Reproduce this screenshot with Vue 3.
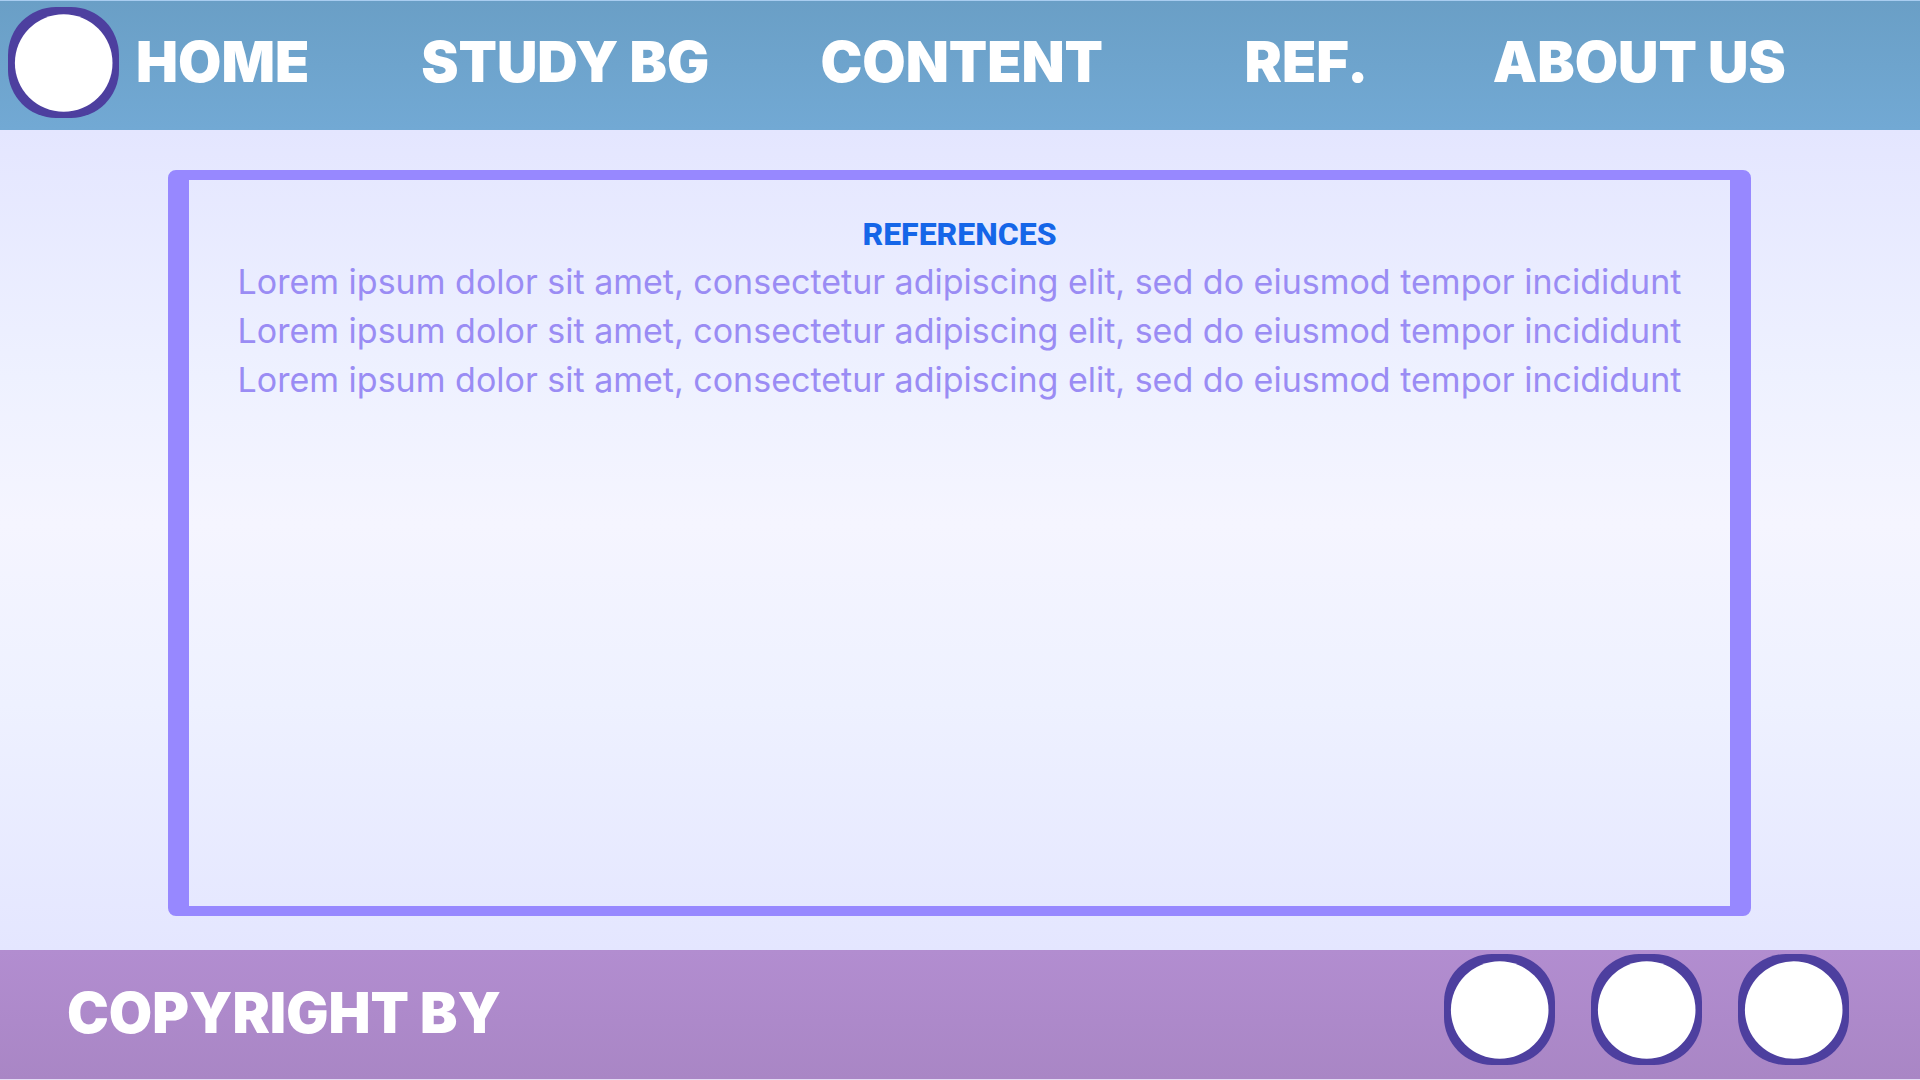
<script setup>
const links = [
  { label: 'HOME', href: '#home' },
  { label: 'STUDY BG', href: '#study-bg' },
  { label: 'CONTENT', href: '#content' },
  { label: 'REF.', href: '#references' },
  { label: 'ABOUT US', href: '#about-us' },
]
const references = Array.from(
  { length: 3 },
  () => 'Lorem ipsum dolor sit amet, consectetur adipiscing elit, sed do eiusmod tempor incididunt',
)
const badges = [1, 2, 3]
</script>

<template>
  <div class="page">
    <header class="bar header">
      <svg class="badge" viewBox="0 0 111 111" aria-hidden="true">
        <rect width="111" height="111" rx="48" fill="#4d3f9f" />
        <circle cx="55.7" cy="56" r="48.8" fill="#fff" />
      </svg>
      <nav class="nav">
        <a v-for="link in links" :key="link.label" :href="link.href">{{ link.label }}</a>
      </nav>
    </header>

    <main class="main">
      <section id="references" class="panel">
        <h1>REFERENCES</h1>
        <p v-for="(text, i) in references" :key="i">{{ text }}</p>
      </section>
    </main>

    <footer class="bar footer">
      <span class="copyright">COPYRIGHT BY</span>
      <div class="badges">
        <svg v-for="n in badges" :key="n" class="badge" viewBox="0 0 111 111" aria-hidden="true">
          <rect width="111" height="111" rx="48" fill="#4d3f9f" />
          <circle cx="55.7" cy="56" r="48.8" fill="#fff" />
        </svg>
      </div>
    </footer>
  </div>
</template>

<style>
body {
  margin: 0;
}
</style>

<style scoped>
.page {
  display: flex;
  flex-direction: column;
  min-height: 100vh;
  font-family: Inter, sans-serif;
}

.bar {
  display: flex;
  align-items: flex-start;
  box-sizing: border-box;
  height: 130px;
  color: #fff;
  font-size: 56px;
  font-weight: 900;
  line-height: 64px;
  white-space: nowrap;
}

.header {
  padding: 6px 0 0 8px;
  border-top: 1px solid #a9cdf0;
  background: linear-gradient(#6a9fc6, #72a9d4);
}

.badge {
  flex: none;
  width: 111px;
  height: 111px;
}

.nav {
  display: grid;
  flex: 1;
  grid-template-columns: 285fr 399fr 424fr 248fr 427fr;
  padding: 23px 0 0 17px;
}

.nav a {
  min-width: 0;
  color: inherit;
  text-decoration: none;
}

.main {
  display: flex;
  flex: 1;
  padding: 40px 169px 34px 168px;
  background: linear-gradient(#e4e6ff, #eef1ff 30%, #f5f5ff 48%, #eef1ff 70%, #e4e6ff);
}

.panel {
  flex: 1;
  padding: 32px 0;
  border: solid #9788ff;
  border-width: 10px 21px;
  border-radius: 8px;
  text-align: center;
}

h1 {
  margin: 0;
  color: #1566e8;
  font-family: Roboto, sans-serif;
  font-size: 32px;
  font-weight: 800;
  line-height: 45px;
}

p {
  margin: 0;
  color: #9a8cf4;
  font-size: 34px;
  line-height: 49px;
}

.footer {
  justify-content: space-between;
  padding: 4px 71px 0 67px;
  border-bottom: 1px solid #e4dcf4;
  background: linear-gradient(#b28dd0, #a986c5);
}

.copyright {
  padding-top: 27px;
}

.badges {
  display: flex;
  gap: 36px;
}
</style>
